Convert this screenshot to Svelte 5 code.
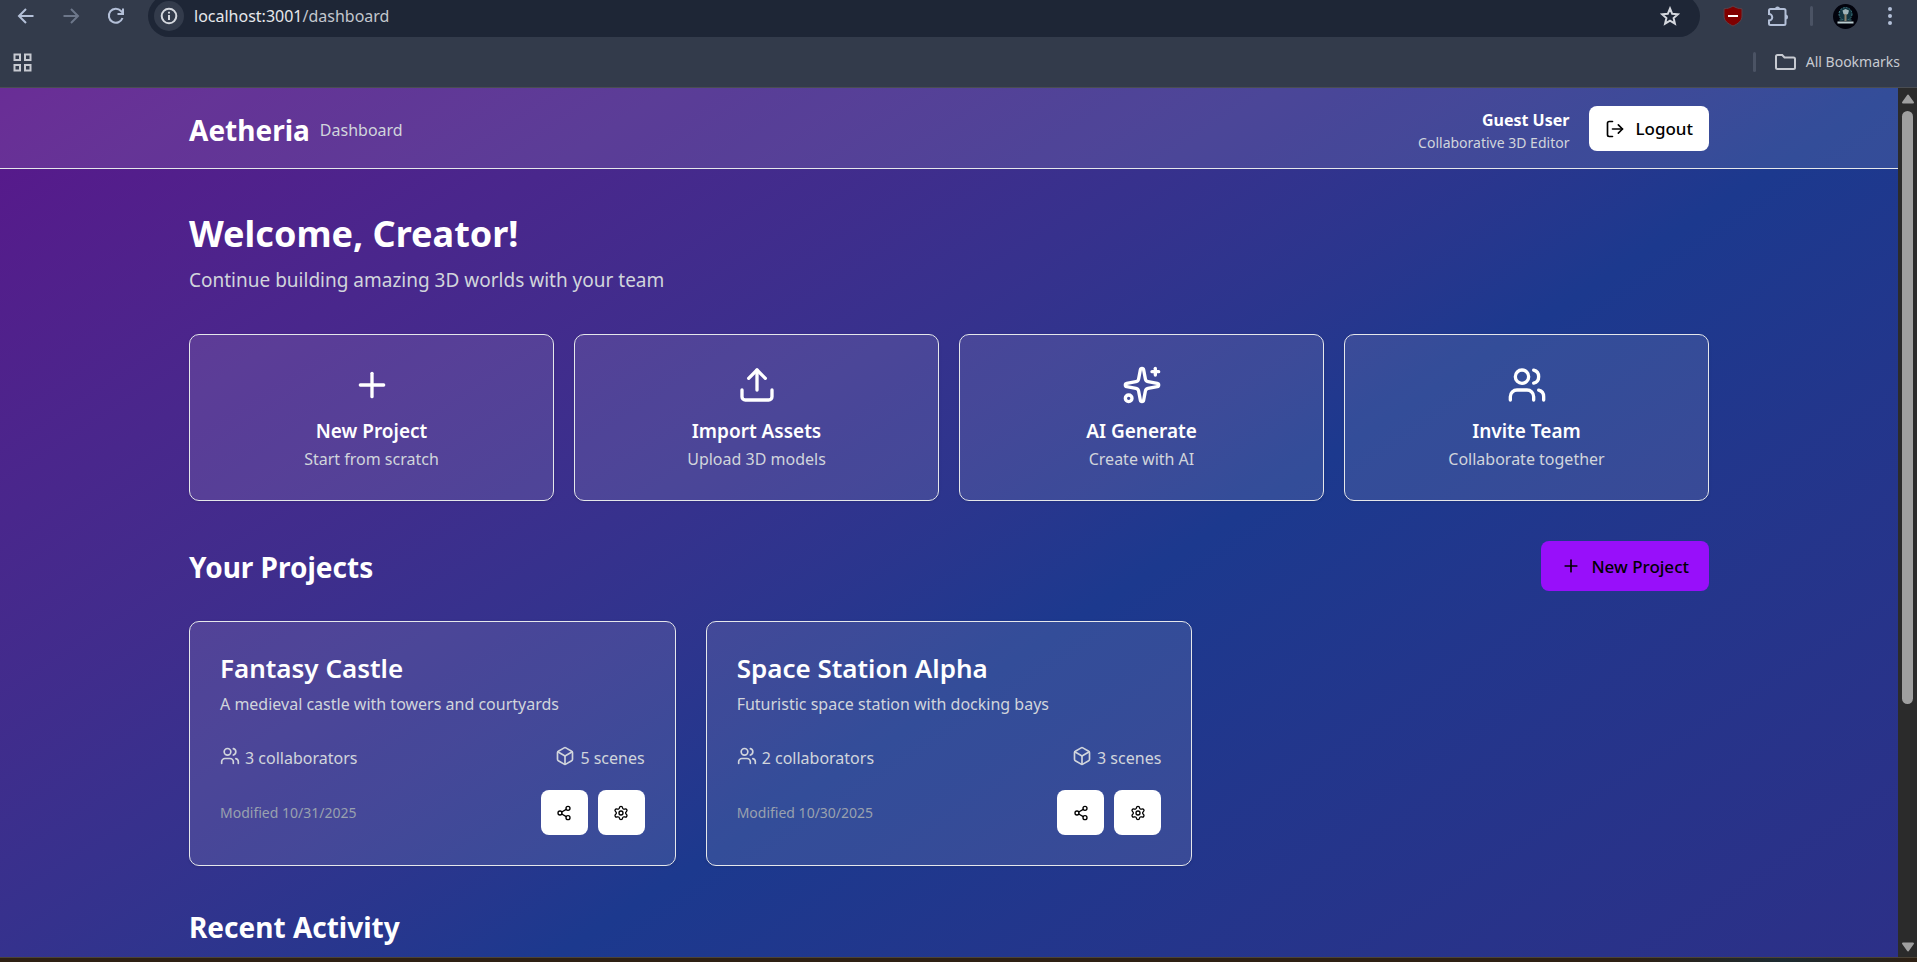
<script lang="ts">
    let actions = [
        { icon: 'plus', title: 'New Project', text: 'Start from scratch' },
        { icon: 'upload', title: 'Import Assets', text: 'Upload 3D models' },
        { icon: 'sparkles', title: 'AI Generate', text: 'Create with AI' },
        { icon: 'users', title: 'Invite Team', text: 'Collaborate together' }
    ];

    let projects = $state([
        {
            name: 'Fantasy Castle',
            description: 'A medieval castle with towers and courtyards',
            collaborators: 3,
            scenes: 5,
            modified: '10/31/2025'
        },
        {
            name: 'Space Station Alpha',
            description: 'Futuristic space station with docking bays',
            collaborators: 2,
            scenes: 3,
            modified: '10/30/2025'
        }
    ]);

    const icons: Record<string, string[]> = {
        plus: ['M5 12h14', 'M12 5v14'],
        upload: ['M12 3v12', 'm17 8-5-5-5 5', 'M21 15v4a2 2 0 0 1-2 2H5a2 2 0 0 1-2-2v-4'],
        sparkles: [
            'M11.017 2.814a1 1 0 0 1 1.966 0l1.051 5.558a2 2 0 0 0 1.594 1.594l5.558 1.051a1 1 0 0 1 0 1.966l-5.558 1.051a2 2 0 0 0-1.594 1.594l-1.051 5.558a1 1 0 0 1-1.966 0l-1.051-5.558a2 2 0 0 0-1.594-1.594l-5.558-1.051a1 1 0 0 1 0-1.966l5.558-1.051a2 2 0 0 0 1.594-1.594z',
            'M20 2v4',
            'M22 4h-4',
            'M2 20a2 2 0 1 0 4 0a2 2 0 1 0-4 0'
        ],
        users: [
            'M16 21v-2a4 4 0 0 0-4-4H6a4 4 0 0 0-4 4v2',
            'M16 3.128a4 4 0 0 1 0 7.744',
            'M22 21v-2a4 4 0 0 0-3-3.87',
            'M5 7a4 4 0 1 0 8 0a4 4 0 1 0-8 0'
        ],
        logout: ['m16 17 5-5-5-5', 'M21 12H9', 'M9 21H5a2 2 0 0 1-2-2V5a2 2 0 0 1 2-2h4'],
        box: [
            'M21 8a2 2 0 0 0-1-1.73l-7-4a2 2 0 0 0-2 0l-7 4A2 2 0 0 0 3 8v8a2 2 0 0 0 1 1.73l7 4a2 2 0 0 0 2 0l7-4A2 2 0 0 0 21 16Z',
            'm3.3 7 8.7 5 8.7-5',
            'M12 22V12'
        ],
        share: [
            'M15 5a3 3 0 1 0 6 0a3 3 0 1 0-6 0',
            'M3 12a3 3 0 1 0 6 0a3 3 0 1 0-6 0',
            'M15 19a3 3 0 1 0 6 0a3 3 0 1 0-6 0',
            'M8.59 13.51l6.83 3.98',
            'M15.41 6.51l-6.82 3.98'
        ],
        settings: [
            'M9.671 4.136a2.34 2.34 0 0 1 4.659 0 2.34 2.34 0 0 0 3.319 1.915 2.34 2.34 0 0 1 2.33 4.033 2.34 2.34 0 0 0 0 3.831 2.34 2.34 0 0 1-2.33 4.033 2.34 2.34 0 0 0-3.319 1.915 2.34 2.34 0 0 1-4.659 0 2.34 2.34 0 0 0-3.32-1.915 2.34 2.34 0 0 1-2.33-4.033 2.34 2.34 0 0 0 0-3.831A2.34 2.34 0 0 1 6.35 6.051a2.34 2.34 0 0 0 3.319-1.915',
            'M9 12a3 3 0 1 0 6 0a3 3 0 1 0-6 0'
        ]
    };
</script>

{#snippet icon(name: string, size: number)}
    <svg class="icon" width={size} height={size} viewBox="0 0 24 24" aria-hidden="true">
        {#each icons[name] as d}
            <path {d} />
        {/each}
    </svg>
{/snippet}

<div class="window">
    <div class="chrome">
        <div class="toolbar">
            <button class="tool" aria-label="Back">
                <svg width="20" height="20" viewBox="0 0 20 20"><path d="M17.500 10H3.500M10 3L3 10l7 7" /></svg>
            </button>
            <button class="tool dim" aria-label="Forward">
                <svg width="20" height="20" viewBox="0 0 20 20"><path d="M2.500 10H16.500M10 3l7 7-7 7" /></svg>
            </button>
            <button class="tool" aria-label="Reload">
                <svg width="20" height="20" viewBox="0 0 20 20"><path d="M16.500 12A7 7 0 1 1 15 5L17 7M17 2.500v5.500h-5.500" /></svg>
            </button>
            <div class="omnibox">
                <button class="site-info" aria-label="View site information">
                    <svg width="18" height="18" viewBox="0 0 18 18">
                        <circle cx="9" cy="9" r="7.300" />
                        <path d="M9 8v5M9 4.800v1.800" />
                    </svg>
                </button>
                <span class="url">localhost:3001<span>/dashboard</span></span>
                <button class="tool star" aria-label="Bookmark this tab">
                    <svg width="20" height="20" viewBox="0 0 20 20"><path d="M10 2.500l2.200 5.300 5.700.5-4.300 3.700 1.300 5.600L10 14.600l-4.900 3 1.300-5.600L2.100 8.300l5.700-.5z" /></svg>
                </button>
            </div>
            <div class="extensions">
                <button class="tool" aria-label="Ad blocker">
                    <svg class="shield" width="20" height="22" viewBox="0 0 20 22">
                        <path class="fill" d="M10 1c2.800 1.800 5.500 2.600 9 2.800V11c0 5-4 7.800-9 10-5-2.200-9-5-9-10V3.800C4.500 3.600 7.200 2.800 10 1z" />
                        <path class="bar" d="M5 11h10" />
                    </svg>
                </button>
                <button class="tool" aria-label="Extensions">
                    <svg width="22" height="22" viewBox="0 0 22 22">
                        <path d="M2 5.500a1.500 1.500 0 0 1 1.500-1.500H17a1.500 1.500 0 0 1 1.500 1.500V18.500a1.500 1.500 0 0 1-1.500 1.500h-13.500A1.500 1.500 0 0 1 2 18.500V15.500a3.200 3.200 0 0 0 0-6.500z" />
                        <path class="knob" d="M8 4a2.500 2.500 0 0 1 5 0zM18.500 9.500a2.500 2.500 0 0 1 0 5z" />
                    </svg>
                </button>
                <span class="divider"></span>
                <button class="tool" aria-label="Profile">
                    <svg class="avatar" width="25" height="25" viewBox="0 0 25 25">
                        <circle cx="12.500" cy="12.500" r="12.500" fill="#02030d" />
                        <circle cx="12.500" cy="10" r="6.500" fill="#12343f" stroke="#3f7c86" stroke-dasharray="2 1" />
                        <path d="M9.500 6.500l3-1.500 3.500 1.500-1 3.500-2.500 1-2-1z" fill="#9fb4b8" />
                        <path d="M12.500 10v7" stroke="#8a7f6a" stroke-width="2" />
                        <path d="M4.500 18.500h16" stroke="#b9ccd0" stroke-width="2" />
                        <path d="M6.500 16h3M15.500 16h3" stroke="#3f7c86" />
                    </svg>
                </button>
                <button class="tool" aria-label="Menu">
                    <svg class="dots" width="20" height="20" viewBox="0 0 20 20">
                        <circle cx="10" cy="3" r="2" /><circle cx="10" cy="10" r="2" /><circle cx="10" cy="17" r="2" />
                    </svg>
                </button>
            </div>
        </div>
        <div class="bookmarks">
            <button class="apps" aria-label="Apps">
                <svg width="19" height="19" viewBox="0 0 19 19">
                    <path d="M1.500 1.500h5.500v5.500h-5.500zM12 1.500h5.500v5.500H12zM1.500 12h5.500v5.500h-5.500zM12 12h5.500v5.500H12z" />
                </svg>
            </button>
            <div class="bookmarks-right">
                <span class="divider"></span>
                <button class="all-bookmarks">
                    <svg width="21" height="16" viewBox="0 0 21 16"><path d="M1 2.500A1.500 1.500 0 0 1 2.500 1h4.700l2.300 2.500h9A1.500 1.500 0 0 1 20 5v8.500a1.500 1.500 0 0 1-1.500 1.500h-16A1.500 1.500 0 0 1 1 13.500z" /></svg>
                    All Bookmarks
                </button>
            </div>
        </div>
    </div>

    <div class="viewport">
        <div class="page">
            <header>
                <div class="container header-row">
                    <div class="brand">
                        <h1>Aetheria</h1>
                        <span>Dashboard</span>
                    </div>
                    <div class="account">
                        <div class="user">
                            <p class="user-name">Guest User</p>
                            <p class="user-role">Collaborative 3D Editor</p>
                        </div>
                        <button class="btn">
                            {@render icon('logout', 20)}
                            Logout
                        </button>
                    </div>
                </div>
            </header>

            <main class="container">
                <h2 class="welcome">Welcome, Creator!</h2>
                <p class="lead">Continue building amazing 3D worlds with your team</p>

                <div class="actions">
                    {#each actions as action}
                        <button class="card action">
                            {@render icon(action.icon, 40)}
                            <span class="action-title">{action.title}</span>
                            <span class="action-text">{action.text}</span>
                        </button>
                    {/each}
                </div>

                <div class="section-head">
                    <h3>Your Projects</h3>
                    <button class="btn primary">
                        {@render icon('plus', 20)}
                        New Project
                    </button>
                </div>

                <div class="projects">
                    {#each projects as project}
                        <article class="card project">
                            <h4>{project.name}</h4>
                            <p class="description">{project.description}</p>
                            <div class="stats">
                                <span>{@render icon('users', 20)}{project.collaborators} collaborators</span>
                                <span>{@render icon('box', 20)}{project.scenes} scenes</span>
                            </div>
                            <div class="project-foot">
                                <span class="modified">Modified {project.modified}</span>
                                <div class="project-buttons">
                                    <button class="btn square" aria-label="Share">{@render icon('share', 16)}</button>
                                    <button class="btn square" aria-label="Settings">{@render icon('settings', 16)}</button>
                                </div>
                            </div>
                        </article>
                    {/each}
                </div>

                <h3 class="recent">Recent Activity</h3>
            </main>
        </div>

        <div class="scrollbar">
            <svg width="14" height="10" viewBox="0 0 14 10"><path d="M7 1.500L12 8.500H2z" /></svg>
            <div class="track">
                <div class="thumb"></div>
            </div>
            <svg width="14" height="10" viewBox="0 0 14 10"><path d="M7 8.500L12 1.500H2z" /></svg>
        </div>
    </div>

    <div class="desktop-edge"></div>
</div>

<style>
    :global(body) {
        margin: 0;
        font-family: "Noto Sans", "Open Sans", sans-serif;
    }
    h1, h2, h3, h4, p {
        margin: 0;
    }
    button {
        font-family: inherit;
        border: 0;
        padding: 0;
        background: none;
        cursor: pointer;
    }
    .window {
        height: 100vh;
        display: flex;
        flex-direction: column;
        overflow: hidden;
    }

    /* browser bars */
    .chrome {
        background: #333b4b;
        border-bottom: 1px solid #4a4d52;
        color: #c7cad1;
    }
    .chrome svg {
        fill: none;
        stroke: #b4c0d8;
        stroke-width: 2;
    }
    .toolbar {
        height: 32px;
        display: flex;
        align-items: center;
        padding: 0 11px 0 10px;
        gap: 13px;
    }
    .tool {
        width: 32px;
        height: 32px;
        flex: none;
        display: flex;
        align-items: center;
        justify-content: center;
    }
    .dim {
        opacity: 0.45;
    }
    .omnibox {
        flex: 1;
        height: 42px;
        box-sizing: border-box;
        margin: 0 4px 0 3px;
        padding: 0 14px 0 6px;
        border-radius: 21px;
        background: #1e2636;
        display: flex;
        align-items: center;
        gap: 10px;
    }
    .site-info {
        width: 30px;
        height: 30px;
        border-radius: 50%;
        background: #333b4b;
        display: flex;
        align-items: center;
        justify-content: center;
    }
    .chrome .site-info svg, .chrome .star svg {
        stroke: #d5d8de;
    }
    .url {
        flex: 1;
        font-size: 16px;
        line-height: 22px;
        color: #e6e8ec;
    }
    .url span {
        color: #c3c7ce;
    }
    .extensions {
        display: flex;
        align-items: center;
        gap: 13px;
    }
    .divider {
        width: 3px;
        height: 20px;
        border-radius: 2px;
        background: #4b5364;
    }
    .extensions .divider {
        margin: 0 3px;
    }
    .chrome .shield {
        stroke: none;
    }
    .shield .fill {
        fill: #800000;
        stroke: #59434b;
        stroke-width: 1;
    }
    .shield .bar {
        stroke: #fff;
        stroke-width: 2;
    }
    .knob {
        fill: #b4c0d8;
        stroke: none;
    }
    .chrome .avatar {
        stroke: none;
        stroke-width: 1;
    }
    .chrome .dots {
        fill: #b4c0d8;
        stroke: none;
    }
    .bookmarks {
        height: 50px;
        margin-top: 5px;
        padding: 0 17px 0 13px;
        display: flex;
        align-items: center;
        justify-content: space-between;
    }
    .apps {
        display: flex;
    }
    .chrome .apps svg, .chrome .all-bookmarks svg {
        stroke: #c7cad1;
    }
    .bookmarks-right {
        display: flex;
        align-items: center;
        gap: 19px;
    }
    .all-bookmarks {
        display: flex;
        align-items: center;
        gap: 10px;
        font-size: 14px;
        line-height: 20px;
        color: #c7cad1;
    }

    /* page */
    .viewport {
        flex: 1;
        min-height: 0;
        display: flex;
    }
    .page {
        flex: 1;
        overflow: hidden;
        color: #fff;
        background: linear-gradient(to bottom right in oklab, #59168b, #1c398e, #312c85) 0 0 / 100% 141%;
    }
    .container {
        max-width: 1600px;
        margin: 0 auto;
        padding: 0 40px;
        box-sizing: border-box;
    }
    header {
        background: rgba(255, 255, 255, 0.1);
        border-bottom: 1px solid #e5e7eb;
    }
    .header-row {
        padding-top: 16px;
        padding-bottom: 15px;
        display: flex;
        align-items: center;
        justify-content: space-between;
    }
    .brand {
        padding-top: 2px;
        display: flex;
        align-items: center;
        gap: 10px;
        font-size: 16px;
        color: #d1d5dc;
    }
    h1 {
        font-size: 28px;
        line-height: 40px;
        color: #fff;
    }
    .account {
        display: flex;
        align-items: center;
        gap: 20px;
    }
    .user {
        padding-top: 5px;
        text-align: right;
    }
    .user-name {
        font-size: 16px;
        line-height: 23px;
        font-weight: 700;
    }
    .user-role {
        font-size: 14px;
        line-height: 21px;
        color: #d1d5dc;
    }
    .btn {
        height: 45px;
        padding: 0 16px;
        display: flex;
        align-items: center;
        justify-content: center;
        gap: 10px;
        border-radius: 8px;
        background: #fff;
        color: #000;
        font-size: 17px;
        font-weight: 500;
        white-space: nowrap;
    }
    .primary {
        height: 50px;
        padding: 0 20px;
        background: #980ffa;
    }
    .square {
        width: 47px;
        padding: 0;
    }
    .icon {
        flex: none;
        fill: none;
        stroke: currentColor;
        stroke-width: 2;
        stroke-linecap: round;
        stroke-linejoin: round;
    }
    main.container {
        padding-top: 40px;
    }
    .welcome {
        font-size: 36px;
        line-height: 49px;
    }
    .lead {
        margin: 8px 0 40px;
        font-size: 19px;
        line-height: 28px;
        color: #d1d5dc;
    }
    .card {
        box-sizing: border-box;
        padding: 30px;
        border: 1px solid #e5e7eb;
        border-radius: 10px;
        background: rgba(255, 255, 255, 0.1);
        box-shadow: 0 1px 3px rgba(0, 0, 0, 0.1);
        color: #fff;
    }
    .actions {
        display: grid;
        grid-template-columns: repeat(4, 1fr);
        gap: 20px;
        margin-bottom: 40px;
    }
    .action {
        padding-bottom: 29px;
        display: flex;
        flex-direction: column;
        align-items: center;
    }
    .action-title {
        margin: 13px 0 3px;
        font-size: 19px;
        line-height: 27px;
        font-weight: 600;
    }
    .action-text {
        font-size: 16px;
        line-height: 23px;
        color: #d1d5dc;
    }
    .section-head {
        display: flex;
        align-items: center;
        justify-content: space-between;
        margin-bottom: 30px;
    }
    h3 {
        font-size: 28px;
        line-height: 42px;
    }
    .section-head h3 {
        padding-top: 2px;
    }
    .projects {
        display: grid;
        grid-template-columns: repeat(3, 1fr);
        gap: 30px;
        margin-bottom: 40px;
    }
    h4 {
        font-size: 26px;
        line-height: 32px;
        font-weight: 600;
    }
    .description {
        margin: 8px 0 30px;
        font-size: 16px;
        line-height: 24px;
        color: #d1d5dc;
    }
    .stats {
        display: flex;
        justify-content: space-between;
        margin-bottom: 19px;
        font-size: 16px;
        line-height: 25px;
        color: #d1d5dc;
    }
    .stats span {
        display: flex;
        gap: 5px;
    }
    .project-foot {
        display: flex;
        align-items: center;
        justify-content: space-between;
    }
    .modified {
        font-size: 14px;
        color: #99a1af;
    }
    .project-buttons {
        display: flex;
        gap: 10px;
    }

    .scrollbar {
        width: 19px;
        box-sizing: border-box;
        padding: 6px 0 5px;
        background: #2b2b2b;
        display: flex;
        flex-direction: column;
        align-items: center;
    }
    .scrollbar svg {
        flex: none;
        fill: #9f9f9f;
        stroke: #9f9f9f;
        stroke-width: 2;
        stroke-linejoin: round;
    }
    .track {
        flex: 1;
        width: 11px;
        margin: 7px 0;
    }
    .thumb {
        height: 72%;
        border-radius: 6px;
        background: #9f9f9f;
    }
    .desktop-edge {
        height: 4px;
        border-top: 1px solid #4b4336;
        background: linear-gradient(to right, #2e2013, #2e2013 85%, #1c2a30 93%, #2e2013);
    }
</style>
